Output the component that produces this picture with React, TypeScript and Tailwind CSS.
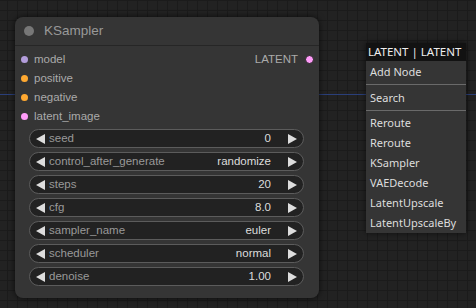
import React from "react";

const inputs = [
  { name: "model", color: "bg-[#b39ddb]" },
  { name: "positive", color: "bg-[#ffa931]" },
  { name: "negative", color: "bg-[#ffa931]" },
  { name: "latent_image", color: "bg-[#ff9cf9]" },
];

const widgets = [
  { name: "seed", value: "0" },
  { name: "control_after_generate", value: "randomize" },
  { name: "steps", value: "20" },
  { name: "cfg", value: "8.0" },
  { name: "sampler_name", value: "euler" },
  { name: "scheduler", value: "normal" },
  { name: "denoise", value: "1.00" },
];

const items = ["Reroute", "Reroute", "KSampler", "VAEDecode", "LatentUpscale", "LatentUpscaleBy"];

function Arrow({ dir }: { dir: "left" | "right" }) {
  return (
    <svg width="9" height="10" viewBox="0 0 9 10" className="shrink-0">
      {dir === "left" ? <polygon points="9,0 9,10 0,5" fill="#dddddd" /> : <polygon points="0,0 0,10 9,5" fill="#dddddd" />}
    </svg>
  );
}

function Widget({ name, value }: { name: string; value: string }) {
  return (
    <div className="flex h-[19px] items-center rounded-full border border-[#5c5c5c] bg-[#222222] pl-[6px] pr-[6px]">
      <Arrow dir="left" />
      <span className="ml-[4px] text-[#999999]">{name}</span>
      <span className="ml-auto mr-[17px] text-[#dddddd]">{value}</span>
      <Arrow dir="right" />
    </div>
  );
}

export default function App() {
  return (
    <div className="relative h-[308px] w-[476px] overflow-hidden bg-[#222222] bg-[linear-gradient(#1b1b1b_1px,transparent_1px),linear-gradient(90deg,#1b1b1b_1px,transparent_1px)] bg-[size:10px_10px] bg-[position:7px_0px]">
      {/* link wire */}
      <div className="absolute left-0 top-[94px] h-px w-full bg-[#2a3f7a]" />

      {/* KSampler node */}
      <div className="absolute left-[15px] top-[17px] flex h-[281px] w-[304px] flex-col rounded-[8px] bg-[#353535] font-['Liberation_Sans',Arial,sans-serif] text-[11.5px] shadow-[0_0_6px_rgba(0,0,0,0.7)]">
        <div className="flex h-[29px] items-center border-b border-[#262626] pl-[9px]">
          <div className="h-[10px] w-[10px] rounded-full bg-[#777777]" />
          <span className="ml-[10px] text-[13.5px] text-[#999999]">KSampler</span>
        </div>
        <div className="relative pt-[4px]">
          {inputs.map((i) => (
            <div key={i.name} className="flex h-[19px] items-center pl-[6px] text-[#aaaaaa]">
              <div className={`h-[7px] w-[7px] rounded-full ${i.color}`} />
              <span className="ml-[6px]">{i.name}</span>
            </div>
          ))}
          <div className="absolute right-[5px] top-[4px] flex h-[19px] items-center text-[#aaaaaa]">
            <span>LATENT</span>
            <div className="ml-[7px] h-[9px] w-[9px] rounded-full border border-[#222222] bg-[#ff9cf9]" />
          </div>
        </div>
        <div className="mt-[3px] flex flex-col gap-[4px] pl-[14px] pr-[15px]">
          {widgets.map((w) => (
            <Widget key={w.name} name={w.name} value={w.value} />
          ))}
        </div>
      </div>

      {/* context menu */}
      <div className="absolute left-[366px] top-[43px] w-[100px] font-['Noto_Sans',sans-serif] text-[11px] shadow-[0_0_6px_rgba(0,0,0,0.6)]">
        <div className="flex h-[18px] items-center bg-[#121212] pl-[2px] text-[11.5px] text-[#eeeeee]">LATENT | LATENT</div>
        <div className="bg-[#353535] pt-[1px] text-[#dddddd]">
          <div className="flex h-[20px] items-center pl-[4px]">Add Node</div>
          <div className="mb-[3px] mt-[2px] h-px bg-[#6a6a6a]" />
          <div className="flex h-[20px] items-center pl-[4px]">Search</div>
          <div className="mb-[2px] mt-[2px] h-px bg-[#6a6a6a]" />
          {items.map((it, k) => (
            <div key={k} className="flex h-[20px] items-center pl-[4px]">
              {it}
            </div>
          ))}
        </div>
      </div>
    </div>
  );
}
